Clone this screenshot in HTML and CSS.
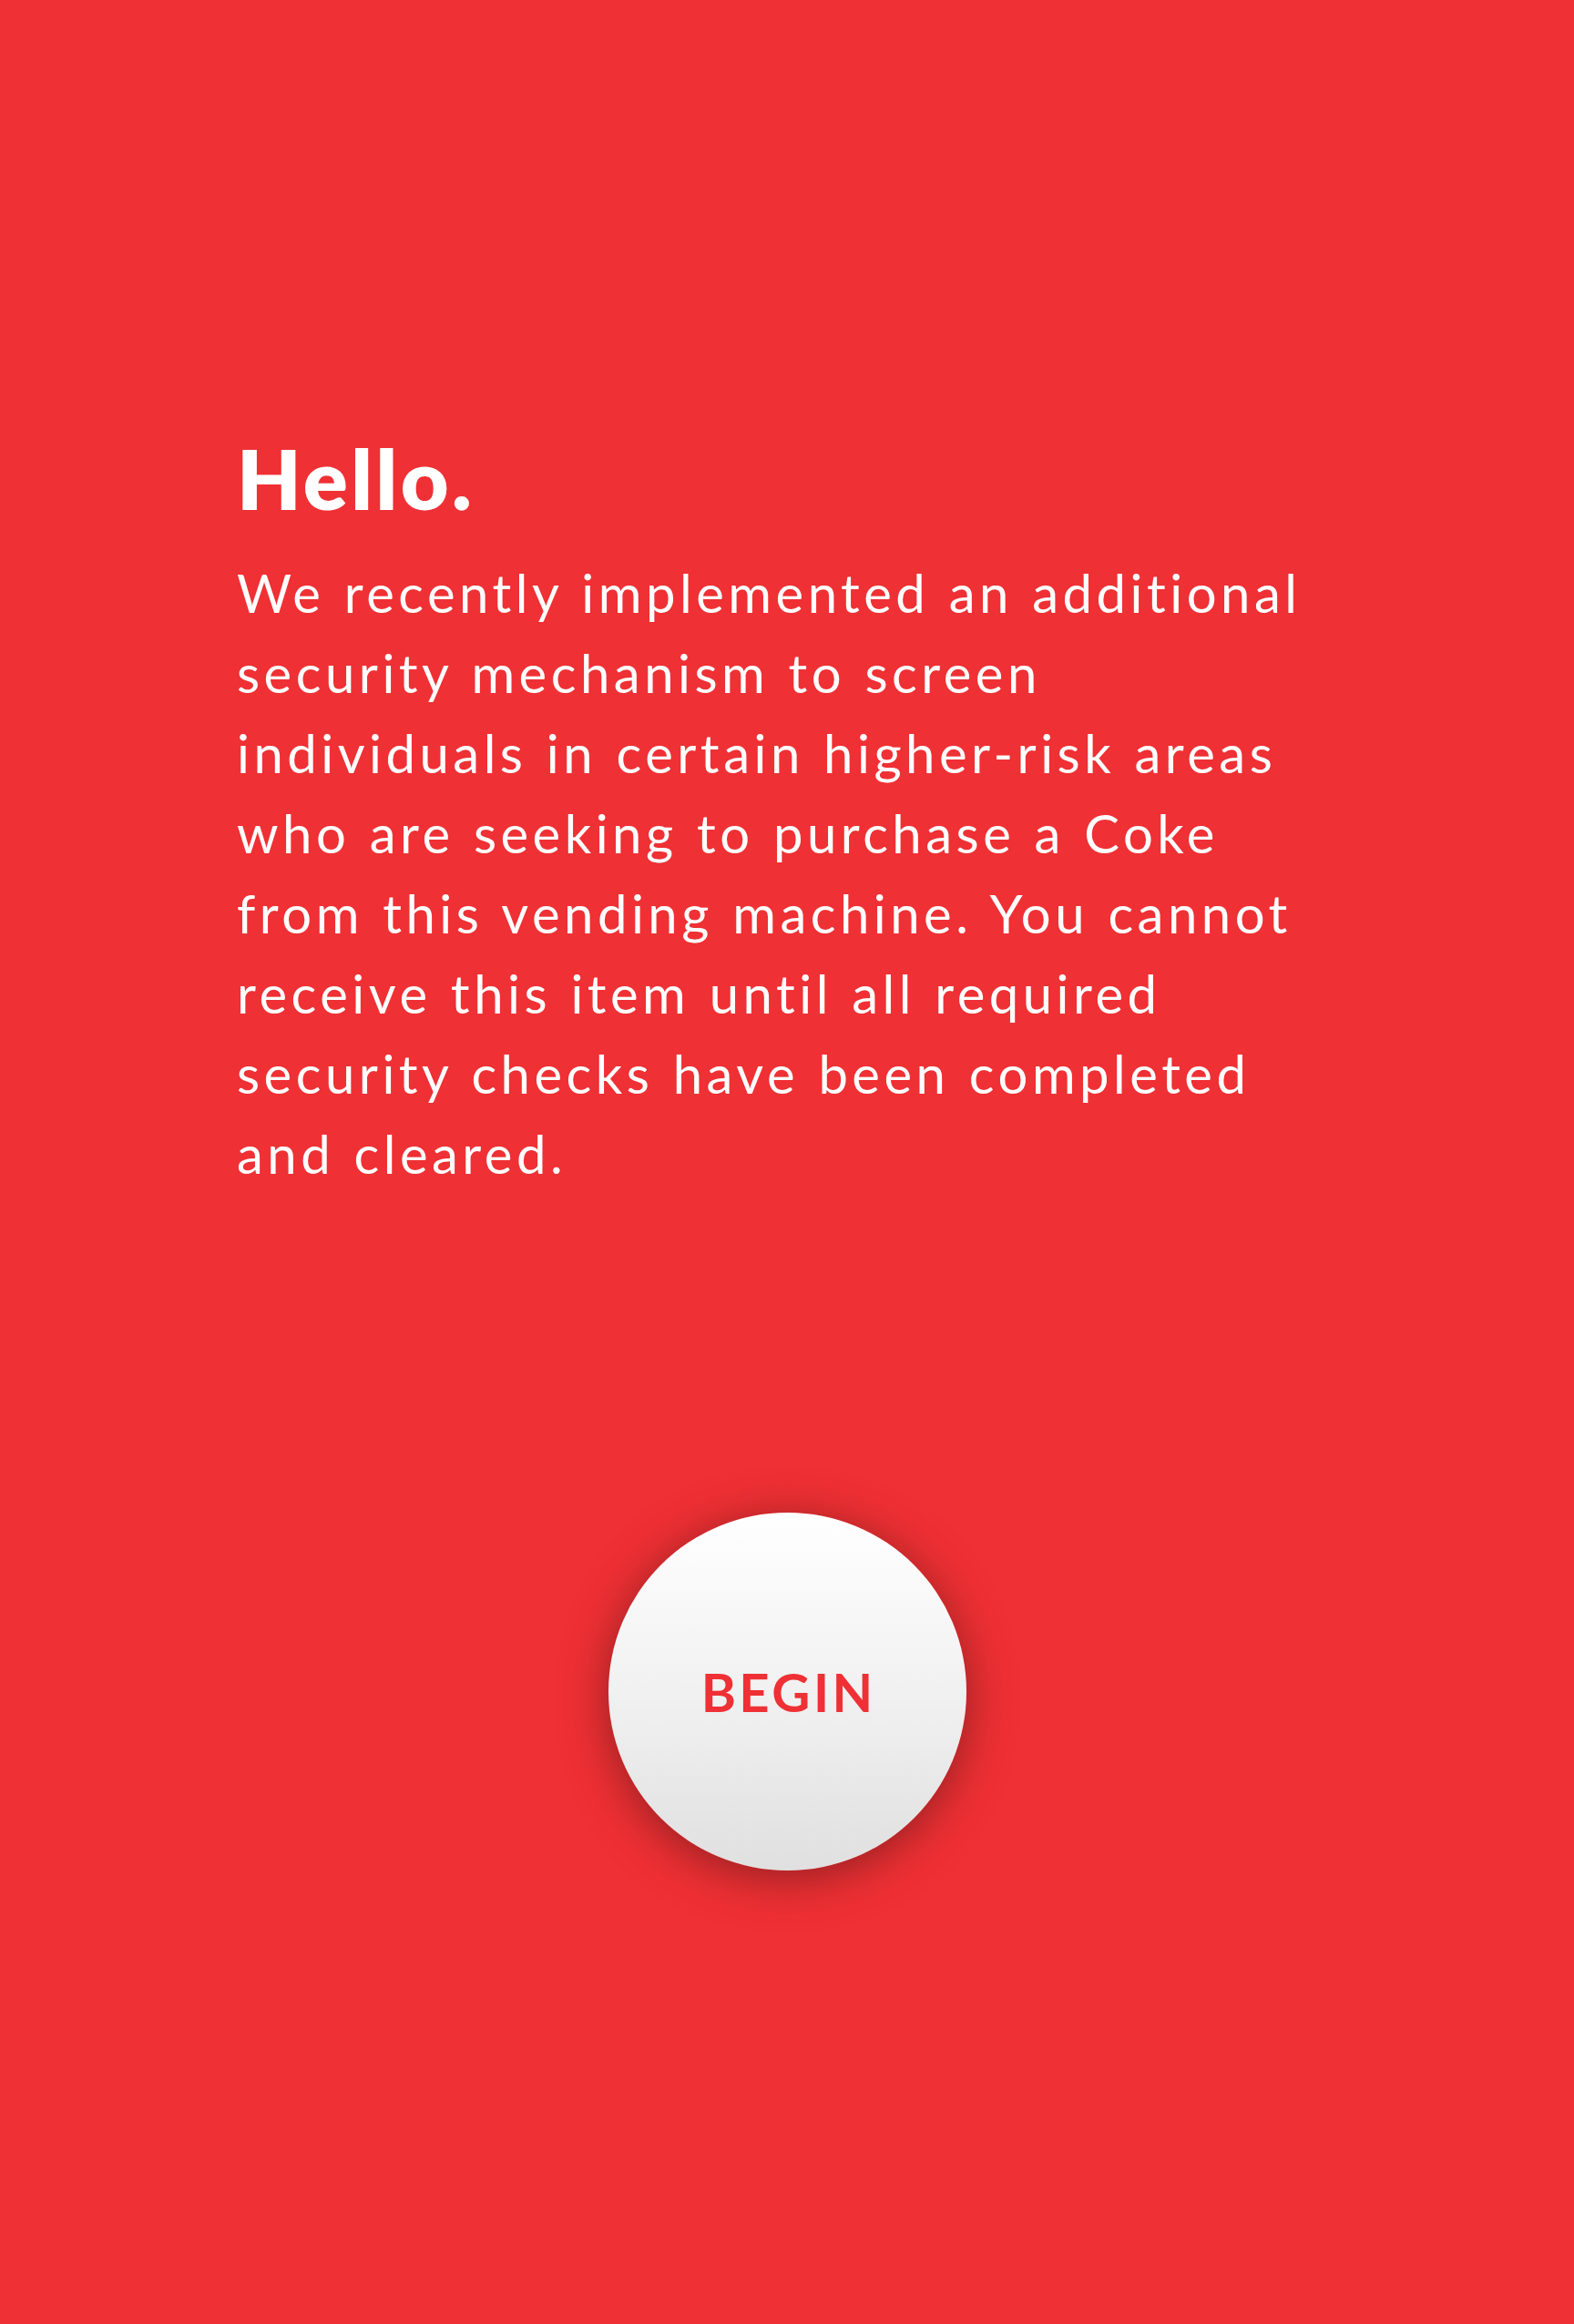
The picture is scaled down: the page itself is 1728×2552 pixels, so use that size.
FILE: index.html
```html
<!DOCTYPE html>
<html lang="en">
<head>
<meta charset="utf-8">
<title>Hello</title>
<link rel="stylesheet" href="styles.css">
</head>
<body>
<main class="screen">
  <section class="intro">
    <h1 class="title">Hello.</h1>
    <p class="message">We recently implemented an additional security mechanism to screen individuals in certain higher-risk areas who are seeking to purchase a Coke from this vending machine. You cannot receive this item until all required security checks have been completed and cleared.</p>
  </section>
  <div class="action">
    <button class="begin" type="button">BEGIN</button>
  </div>
</main>
</body>
</html>
```
FILE: styles.css
```css
html, body {
  margin: 0;
  padding: 0;
  background: #ef3034;
}
body {
  font-family: Lato, "Noto Sans", sans-serif;
  color: #ffffff;
  min-height: 2552px;
  font-variant-ligatures: none;
}
.screen {
  display: flex;
  flex-direction: column;
  padding: 479px 0 0 0;
}
.intro {
  padding-left: 260px;
  width: 1190px;
}
.title {
  margin: 0;
  font-size: 91px;
  line-height: 91px;
  font-weight: 800;
  letter-spacing: 3.5px;
}
.message {
  margin: 37px 0 0 0;
  font-size: 58px;
  line-height: 88px;
  font-weight: 400;
  letter-spacing: 4.5px;
  word-spacing: 2px;
}
.action {
  display: flex;
  justify-content: center;
  margin-top: 350px;
}
.begin {
  width: 393px;
  height: 393px;
  border-radius: 50%;
  border: none;
  background: linear-gradient(180deg, #ffffff 0%, #f1f1f1 50%, #e0e0e0 100%);
  box-shadow: 0 8px 50px rgba(70, 20, 20, 0.55);
  color: #ef3034;
  font-family: Lato, "Noto Sans", sans-serif;
  font-size: 58px;
  font-weight: 700;
  letter-spacing: 3.5px;
  text-indent: 3.5px;
  padding: 0;
  cursor: pointer;
}
```
